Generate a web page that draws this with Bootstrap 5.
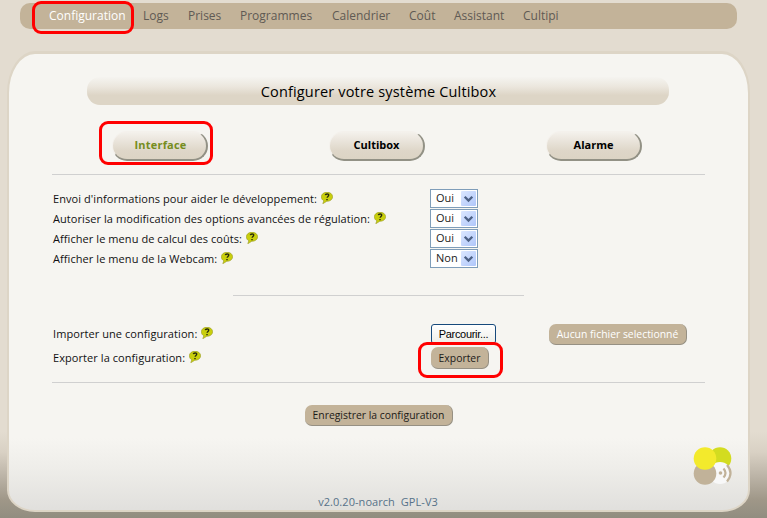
<!DOCTYPE html>
<html lang="fr">
<head>
<meta charset="utf-8">
<meta name="viewport" content="width=device-width, initial-scale=1">
<title>Cultibox - Configuration</title>
<link href="https://cdn.jsdelivr.net/npm/bootstrap@5.3.0/dist/css/bootstrap.min.css" rel="stylesheet">
<style>
body{width:767px;height:518px;font-family:"Open Sans",sans-serif;font-size:11px;line-height:20px;color:#111;background:linear-gradient(#e3dcd0 0,#e3dcd0 432px,#d9d1c4 452px,#bdb5a8 475px,#9f9788 500px,#918d80 518px)}
.menu{margin:3px 30px 0 20px;height:26px;padding:0 0 0 29px;background:#c3b399;border-radius:10px;display:grid;grid-template-columns:94px 45px 52px 92px 77px 45px 69px 50px;font-size:12px;line-height:25px}
.menu a{color:#5f5a54;padding:0;white-space:nowrap}
.menu a.active{color:#fff}
.panel{width:743px;height:461px;margin:22px 0 0 7px;border:2px solid #ddd5c6;border-top-width:3px;border-radius:28px 28px 28px 28px/42px 42px 22px 22px;padding:23px 43px 0;background:linear-gradient(#f6f5f1 0,#f6f5f1 384px,#efeeea 412px,#e0dfdc 458px)}
.title-bar{width:582px;height:28px;margin-left:35px;border-radius:13px;background:linear-gradient(#f5f4f0,#ebe6dd 35%,#ddd5c6 65%,#ddd5c6);font-size:14.5px;letter-spacing:.16px;line-height:29px;font-weight:400;color:#000;padding-left:1px}
.tabs-line{height:70px;border-bottom:1px solid #d0d0d0;padding:26px 63px 0 60px}
.pill{width:96px;height:30px;padding:0 0 2px;border:1px solid #f4f1ec;border-right:2px solid #929185;border-bottom:2px solid #929185;border-radius:16px;background:linear-gradient(#f4f1ec,#ded6c8 70%,#dcd4c4);font-size:11px;font-weight:700;line-height:24px;color:#000}
.pill.active{color:#758d20;letter-spacing:.2px;padding-left:2px}
.rows{padding-top:14px}
.opt{display:grid;grid-template-columns:377px 118px 1fr;height:20px;padding-left:1px}
.label-text{line-height:20px;white-space:nowrap;letter-spacing:.07px}
.help{width:12px;height:12px;margin-left:4px;position:relative;top:-2px}
.choice{width:48px;height:19px;border:1px solid #7f9db9;background:#fff;padding:0 1px 0 5px;line-height:16px;font-size:11px;color:#222}
.choice span{position:relative;top:-1px}
.choice svg{width:15px;height:15px}
.half-rule{width:291px;height:1px;background:#d0d0d0;margin:26px 0 0 181px}
.tan{background:#c3b399;border:0;border-bottom:1px solid #969083;border-right:1px solid #969083;border-radius:7px;padding:0;font-size:10.4px;line-height:18px;height:21px;color:#1c1a18;display:block}
.files{padding-top:28px}
.files .tan,.files .browse{margin-left:1px}
.browse{width:65px;height:20px;border:1px solid #174a7c;border-radius:3px;background:linear-gradient(#fff,#eeeee8);padding:0;font:11px/18px "Liberation Sans",sans-serif;color:#000;display:block;letter-spacing:-.3px}
.full-rule{height:1px;background:#d0d0d0}
.foot{color:#567289;font-size:11px;letter-spacing:.06px;line-height:18px;margin-top:67px;padding-right:1px}
.brand-mark{left:693px;top:446px;width:40px;height:40px}
.ring{border:3px solid #f00;border-radius:9px;pointer-events:none}
.ring-a{left:32px;top:1px;width:102px;height:33px}
.ring-b{left:99px;top:121px;width:114px;height:44px}
.ring-c{left:418px;top:342px;width:85px;height:36px}
</style>
<script src="https://cdn.jsdelivr.net/npm/bootstrap@5.3.0/dist/js/bootstrap.bundle.min.js"></script>
</head>
<body class="position-relative overflow-hidden d-flex flex-column">
<svg width="0" height="0" class="position-absolute">
<defs>
<linearGradient id="blue" x2="1" y2="1"><stop stop-color="#dce7ff"/><stop offset="1" stop-color="#afc6fa"/></linearGradient>
<symbol id="q" viewBox="0 0 12 12"><path d="M6 .3C2.700.3.4 2.100.4 4.800c0 2 .9 3.200 2.400 3.900L1.800 11.700 5.800 9.300c3.400 0 5.800-1.800 5.800-4.500S9.300.3 6 .3Z" fill="#c9cf0c" stroke="#989b25" stroke-width=".6"/><path d="M4.300 3.200C4.600 1.500 8 1.500 7.700 3.300 7.600 4.500 6.200 4.400 6.100 5.800M6 7v1.300" fill="none" stroke="#25280c" stroke-width="1.400"/></symbol>
<symbol id="arrow" viewBox="0 0 15 15"><rect width="15" height="15" rx="1" fill="url(#blue)"/><path d="M3.700 5.700 7.500 9.500 11.300 5.700" fill="none" stroke="#4d6185" stroke-width="2.300"/></symbol>
</defs>
</svg>

<nav class="menu">
<a class="nav-link active" href="#">Configuration</a><a class="nav-link" href="#">Logs</a><a class="nav-link" href="#">Prises</a><a class="nav-link" href="#">Programmes</a><a class="nav-link" href="#">Calendrier</a><a class="nav-link" href="#">Coût</a><a class="nav-link" href="#">Assistant</a><a class="nav-link" href="#">Cultipi</a>
</nav>

<main class="panel">
<h1 class="title-bar text-center mb-0">Configurer votre système Cultibox</h1>
<div class="tabs-line d-flex justify-content-between">
<button class="pill active">Interface</button><button class="pill">Cultibox</button><button class="pill">Alarme</button>
</div>
<section class="rows">
<div class="opt"><div class="label-text">Envoi d'informations pour aider le développement:<svg class="help"><use href="#q"/></svg></div><div class="choice d-flex justify-content-between align-items-center"><span>Oui</span><svg><use href="#arrow"/></svg></div></div>
<div class="opt"><div class="label-text">Autoriser la modification des options avancées de régulation:<svg class="help"><use href="#q"/></svg></div><div class="choice d-flex justify-content-between align-items-center"><span>Oui</span><svg><use href="#arrow"/></svg></div></div>
<div class="opt"><div class="label-text">Afficher le menu de calcul des coûts:<svg class="help"><use href="#q"/></svg></div><div class="choice d-flex justify-content-between align-items-center"><span>Oui</span><svg><use href="#arrow"/></svg></div></div>
<div class="opt"><div class="label-text">Afficher le menu de la Webcam:<svg class="help"><use href="#q"/></svg></div><div class="choice d-flex justify-content-between align-items-center"><span>Non</span><svg><use href="#arrow"/></svg></div></div>
</section>
<div class="half-rule"></div>
<section class="files">
<div class="opt" style="height:23px"><div class="label-text">Importer une configuration:<svg class="help"><use href="#q"/></svg></div><div><button class="browse">Parcourir...</button></div><div><button class="tan text-white" style="width:138px">Aucun fichier selectionné</button></div></div>
<div class="opt" style="height:35px"><div class="label-text" style="line-height:22px">Exporter la configuration:<svg class="help"><use href="#q"/></svg></div><div><button class="tan" style="width:58px;height:22px">Exporter</button></div></div>
</section>
<div class="full-rule"></div>
<button class="tan" style="width:148px;margin:22px 0 0 253px">Enregistrer la configuration</button>
<footer class="foot text-center">v2.0.20-noarch&nbsp; GPL-V3</footer>
</main>

<svg class="brand-mark position-absolute" viewBox="0 0 40 40"><circle cx="27" cy="12.500" r="11.300" fill="#d3dc20"/><circle cx="27" cy="27" r="11" fill="#f8f8f8"/><circle cx="12" cy="27.500" r="11.300" fill="#c1b299"/><circle cx="12" cy="12.500" r="11.300" fill="#f3ea2c"/><circle cx="27.500" cy="27" r="1.800" fill="#c1b299"/><path d="M30.500 22.500q4 4.500 0 9M34 19q7 8 0 16.500" fill="none" stroke="#c1b299" stroke-width="2.200"/></svg>
<div class="ring ring-a position-absolute"></div>
<div class="ring ring-b position-absolute"></div>
<div class="ring ring-c position-absolute"></div>
</body>
</html>
